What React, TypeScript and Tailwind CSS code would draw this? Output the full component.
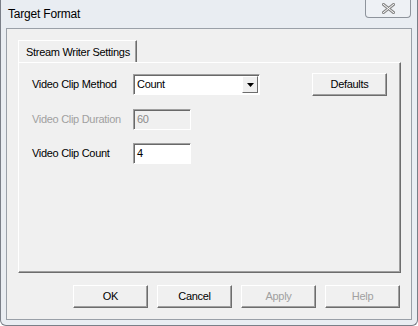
const font = { fontFamily: '"Liberation Sans", Arial, sans-serif' };

const btn =
  'flex h-[23px] w-[75px] items-center justify-center border border-t-white border-l-white border-r-[#6d6d6d] border-b-[#6d6d6d] bg-[#f0f0f0] text-[11px] tracking-[-0.3px] shadow-[inset_-1px_-1px_0_#a0a0a0]';

const sunken =
  'flex h-[21px] items-center border border-t-[#a0a0a0] border-l-[#a0a0a0] border-r-white border-b-white shadow-[inset_1px_1px_0_#696969] pl-[3px] text-[11px]';

function App() {
  return (
    <div
      className="flex h-[326px] w-[418px] flex-col rounded-b-[6px] border-x border-b border-x-[#7a7f88] border-b-[#7a7f88] bg-[#e9edf2]"
      style={font}
    >
      <div className="flex h-[28px] items-start justify-between pl-[7px] pr-[6px]">
        <span className="mt-[5px] text-[12px] tracking-[-0.2px] text-black">Target Format</span>
        <button className="flex h-[18px] w-[46px] items-center justify-center rounded-b-[4px] border-x border-b border-[#8e949c] bg-[#eef1f5]">
          <svg width="13" height="11" viewBox="0 0 13 11">
            <path
              d="M1.5 1.5 L11.5 9.5 M11.5 1.5 L1.5 9.5"
              stroke="#888"
              strokeWidth="3"
              strokeLinecap="square"
            />
            <path
              d="M1.5 1.5 L11.5 9.5 M11.5 1.5 L1.5 9.5"
              stroke="#fff"
              strokeWidth="1"
              strokeLinecap="square"
            />
          </svg>
        </button>
      </div>

      <div className="mx-[5px] flex h-[292px] flex-col border border-[#9aa0a8] bg-[#f0f0f0] pl-[11px] pr-[10px] pt-[11px] tracking-[-0.3px]">
        <div className="flex">
          <div className="flex h-[23px] items-center border-l border-t border-r border-l-white border-t-white border-r-[#6d6d6d] pl-[7px] pr-[6px] text-[11px] shadow-[inset_-1px_0_0_#a0a0a0]">
            Stream Writer Settings
          </div>
        </div>
        <div className="-mt-px flex h-[211px] w-[383px] flex-col gap-[13px] border border-t-white border-l-white border-r-[#6d6d6d] border-b-[#6d6d6d] pl-[13px] pt-[10px] shadow-[inset_-1px_-1px_0_#a0a0a0]">
          <div className="flex items-center text-[11px]">
            <span className="w-[101px] text-black">Video Clip Method</span>
            <div className={`${sunken} w-[127px] justify-between bg-white`}>
              <span>Count</span>
              <div className="mr-px flex h-[17px] w-[16px] items-center justify-center border border-t-white border-l-white border-r-[#6d6d6d] border-b-[#6d6d6d] bg-[#f0f0f0]">
                <svg width="7" height="4" viewBox="0 0 7 4">
                  <path d="M0 0 H7 L3.5 4 Z" fill="#000" />
                </svg>
              </div>
            </div>
            <div className={`${btn} ml-[52px]`}>Defaults</div>
          </div>
          <div className="flex items-center text-[11px]">
            <span className="w-[101px] text-[#a0a0a0]">Video Clip Duration</span>
            <div className={`${sunken} w-[58px] bg-[#f0f0f0] text-[#8a8a8a]`}>60</div>
          </div>
          <div className="flex items-center text-[11px]">
            <span className="w-[101px] text-black">Video Clip Count</span>
            <div className={`${sunken} w-[58px] bg-white`}>4</div>
          </div>
        </div>
        <div className="mt-[12px] flex justify-end gap-[9px] pr-px">
          <div className={btn}>OK</div>
          <div className={btn}>Cancel</div>
          <div className={`${btn} text-[#a0a0a0]`}>Apply</div>
          <div className={`${btn} text-[#a0a0a0]`}>Help</div>
        </div>
      </div>
    </div>
  );
}

export default App;
